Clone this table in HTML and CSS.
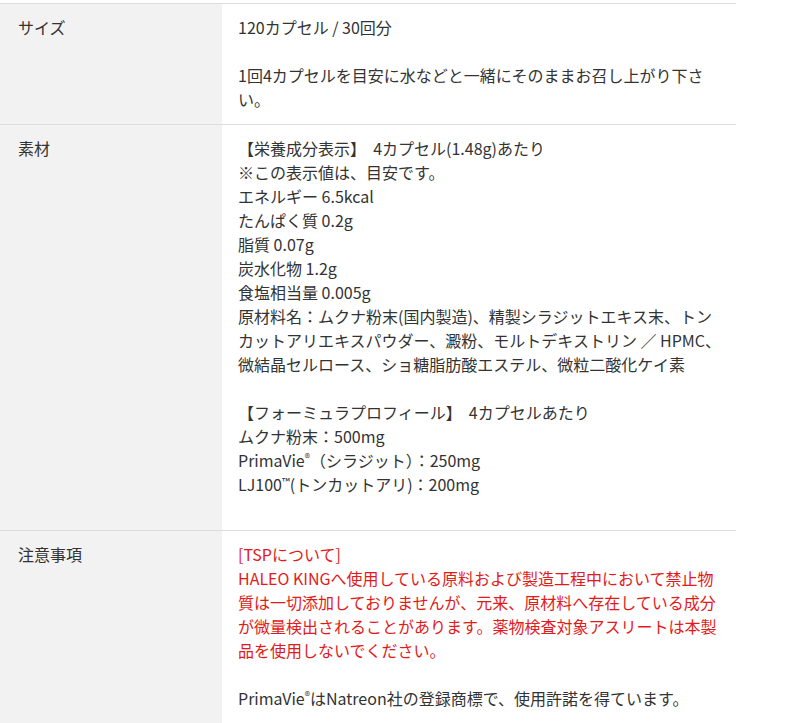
FILE: index.html
```html
<!DOCTYPE html>
<html lang="ja">
<head>
  <meta charset="UTF-8">
  <meta name="viewport" content="width=device-width, initial-scale=1.0">
  <title>商品仕様</title>
  <link rel="stylesheet" href="styles.css">
</head>
<body>
  <table class="spec-table">
    <tbody>
      <tr>
        <th>サイズ</th>
        <td>120カプセル / 30回分<br><br>1回4カプセルを目安に水などと一緒にそのままお召し上がり下さい。</td>
      </tr>
      <tr>
        <th>素材</th>
        <td class="materials">【栄養成分表示】&nbsp; 4カプセル(1.48g)あたり<br>
          ※この表示値は、目安です。<br>
          エネルギー 6.5kcal<br>
          たんぱく質 0.2g<br>
          脂質 0.07g<br>
          炭水化物 1.2g<br>
          食塩相当量 0.005g<br>
          原材料名：ムクナ粉末(国内製造)、精製シラジットエキス末、トンカットアリエキスパウダー、澱粉、モルトデキストリン ／ HPMC、微結晶セルロース、ショ糖脂肪酸エステル、微粒二酸化ケイ素<br>
          <br>
          【フォーミュラプロフィール】&nbsp; 4カプセルあたり<br>
          ムクナ粉末：500mg<br>
          PrimaVie<sup>®</sup>（シラジット）：250mg<br>
          LJ100<sup>™</sup>(トンカットアリ)：200mg<br>
          <br>
        </td>
      </tr>
      <tr>
        <th>注意事項</th>
        <td>
          <span class="caution">[TSPについて]<br>
          HALEO KINGへ使用している原料および製造工程中において禁止物質は一切添加しておりませんが、元来、原材料へ存在している成分が微量検出されることがあります。薬物検査対象アスリートは本製品を使用しないでください。</span><br>
          <br>
          PrimaVie<sup>®</sup>はNatreon社の登録商標で、使用許諾を得ています。
        </td>
      </tr>
    </tbody>
  </table>
</body>
</html>
```

FILE: styles.css
```css
/* 仕様テーブル */
body {
  margin: 0;
  background-color: #fff;
  color: #333;
  font-family: "Noto Sans CJK JP", "Noto Sans", sans-serif;
  font-size: 16px;
  line-height: 24px;
}
.spec-table {
  width: 736px;
  margin-top: 3px;
  border-collapse: collapse;
  border-top: 1px solid #ddd;
}
.spec-table tr {
  border-bottom: 1px solid #ddd;
}
.spec-table th,
.spec-table td {
  vertical-align: top;
  text-align: left;
  font-weight: normal;
  padding: 11px 12px 13px 16px;
}
.spec-table th {
  width: 222px;
  box-sizing: border-box;
  padding-left: 18px;
  background-color: #f2f2f2;
}
.spec-table .materials {
  padding-bottom: 10px;
}
.spec-table sup {
  font-size: 11px;
  line-height: 0;
  vertical-align: 5px;
}
.caution {
  color: #e21a1a;
}
```
